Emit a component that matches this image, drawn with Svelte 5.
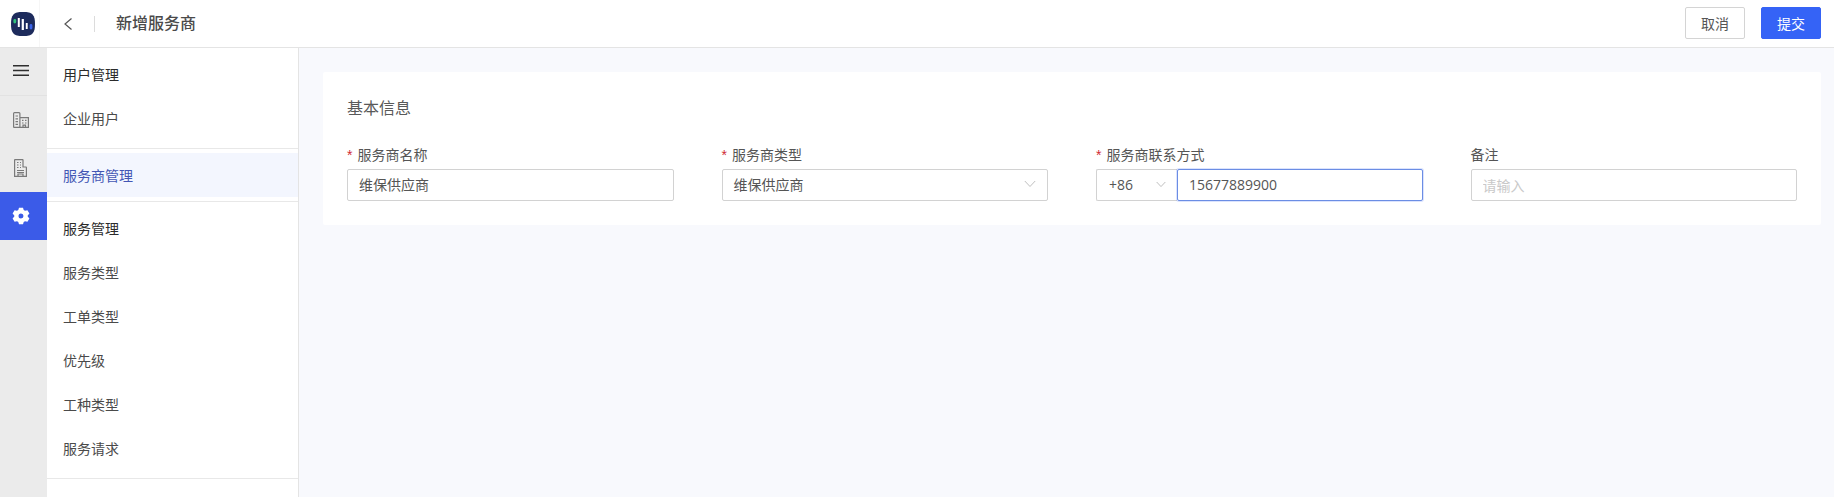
<script>
  const groups = [
    { items: [{ t: '用户管理', h: true }, { t: '企业用户' }] },
    { items: [{ t: '服务商管理', active: true }], single: true },
    { items: [{ t: '服务管理', h: true }, { t: '服务类型' }, { t: '工单类型' }, { t: '优先级' }, { t: '工种类型' }, { t: '服务请求' }] }
  ];
</script>

<div class="page">
  <header class="top">
    <div class="logo-cell">
      <svg width="24" height="24" viewBox="0 0 24 24" aria-hidden="true">
        <path d="M12 0c5 0 7.500.5 9.500 2.500S24 7.500 24 12s-.5 7.500-2.500 9.500S17 24 12 24s-7.500-.5-9.500-2.500S0 16.500 0 12s.5-7.500 2.500-9.500S7 0 12 0z" fill="#1d2b5c"/>
        <rect x="2.400" y="7" width="2.800" height="4.500" rx="1.400" fill="#2fc27a"/>
        <rect x="6.800" y="6" width="2" height="9" fill="#fff"/>
        <rect x="10.700" y="7" width="2.200" height="11" fill="#fff"/>
        <rect x="14.800" y="11" width="1.900" height="6" fill="#fff"/>
        <rect x="18.600" y="12" width="2.800" height="5.500" rx="1.400" fill="#3a62e8"/>
      </svg>
    </div>
    <button class="back" aria-label="返回">
      <svg width="10" height="14" viewBox="0 0 10 14"><path d="M8.500 1.500 2 7l6.500 5.500" fill="none" stroke="#555" stroke-width="1.200"/></svg>
    </button>
    <span class="vline"></span>
    <h1>新增服务商</h1>
    <div class="actions">
      <button class="btn">取消</button>
      <button class="btn primary">提交</button>
    </div>
  </header>

  <div class="body">
    <nav class="rail">
      <div class="rail-item menu">
        <svg width="16" height="11" viewBox="0 0 16 11"><path d="M0 .75h16M0 5.500h16M0 10.250h16" stroke="#2e2e2e" stroke-width="1.300"/></svg>
      </div>
      <div class="rail-item">
        <svg width="16" height="16" viewBox="0 0 16 16" fill="none" stroke="#7a7a7a" stroke-width="1.200">
          <path d="M.6 15.400V1.500q0-.9.9-.9h4.500q.9 0 .9.9v13.900M6.900 5.600h8.500v9.800H.6"/>
          <path d="M2.500 4h2.500M2.500 6.800h2.500M2.500 9.600h2.500M2.500 12.400h2.500M9 8.400h1.500M12 8.400h1.500M9 11h1.500M12 11h1.500M10 15.400v-2.200h2.500v2.200"/>
        </svg>
      </div>
      <div class="rail-item">
        <svg width="13" height="18" viewBox="0 0 13 18" fill="none" stroke="#7a7a7a" stroke-width="1.200">
          <path d="M.6 17.400V1q0-.4.4-.4h7.600q.4 0 .4.4v7H12q.4 0 .4.4v9z"/>
          <path d="M3 3.500h1.500M6 3.500h1M3 6h1.500M6 6h1M3 8.500h1.500M6 8.500h1M3 11.500h7M3 13.500h7M4 17.400v-2.400h5v2.400"/>
        </svg>
      </div>
      <div class="rail-item on">
        <svg width="18" height="18" viewBox="0 0 18 18"><path fill-rule="evenodd" d="M7 .8h4l.7 2.300 1.300.7 2.400-.6 2 3.400-1.700 1.800v1.200l1.700 1.800-2 3.400-2.400-.6-1.300.7-.7 2.300H7l-.7-2.300-1.300-.7-2.400.6-2-3.400 1.700-1.800V8.400L.6 6.600l2-3.400 2.400.6 1.300-.7zM9 6.500a2.500 2.500 0 1 0 0 5 2.500 2.500 0 0 0 0-5z" fill="#fff"/></svg>
      </div>
    </nav>

    <aside class="side">
      {#each groups as g}
        <div class="group" class:single={g.single}>
          {#each g.items as it}
            <div class="item" class:head={it.h} class:active={it.active}>{it.t}</div>
          {/each}
        </div>
      {/each}
    </aside>

    <main class="main">
      <section class="card">
        <h2>基本信息</h2>
        <div class="form">
          <div class="field">
            <span class="label"><i>*</i>服务商名称</span>
            <input class="input raised" value="维保供应商" readonly />
          </div>
          <div class="field">
            <span class="label"><i>*</i>服务商类型</span>
            <div class="input select raised">
              <span>维保供应商</span>
              <svg width="12" height="8" viewBox="0 0 12 8"><path d="M.8 1 6 6.500 11.200 1" fill="none" stroke="#bfbfbf" stroke-width="1"/></svg>
            </div>
          </div>
          <div class="field">
            <span class="label"><i>*</i>服务商联系方式</span>
            <div class="phone">
              <div class="input code raised">
                <span>+86</span>
                <svg width="10" height="7" viewBox="0 0 12 8"><path d="M.8 1 6 6.500 11.200 1" fill="none" stroke="#bfbfbf" stroke-width="1.200"/></svg>
              </div>
              <input class="input num raised" value="15677889900" readonly />
            </div>
          </div>
          <div class="field">
            <span class="label">备注</span>
            <input class="input" placeholder="请输入" readonly />
          </div>
        </div>
      </section>
    </main>
  </div>
</div>

<style>
  :global(body) { margin: 0; }
  .page {
    width: 1834px; height: 497px; overflow: hidden;
    display: flex; flex-direction: column;
    font-family: "Open Sans", "Noto Sans CJK SC", sans-serif;
    font-size: 14px; color: #4a4a4a; background: #f8f9fd;
  }
  .top {
    height: 47px; flex: none; box-sizing: content-box; background: #fff; border-bottom: 1px solid #e4e4e4;
    display: flex; align-items: center; padding-right: 13px;
  }
  .logo-cell {
    width: 40px; height: 47px; flex: none; margin-right: 23px;
    display: flex; align-items: center; justify-content: center;
    padding-left: 6px; box-sizing: border-box;
    border-right: 1px solid #f6f6f6;
  }
  .back { border: 0; background: none; padding: 0; width: 10px; height: 14px; display: block; line-height: 0; }
  .vline { width: 1px; height: 16px; background: #dcdcdc; margin: 0 20px 0 21px; }
  h1 { margin: 0 0 1px 1px; font-size: 16px; font-weight: 500; color: #4a4a4a; line-height: 24px; }
  .actions { margin-left: auto; margin-bottom: 1px; display: flex; gap: 16px; }
  .btn {
    width: 60px; height: 32px; border: 1px solid #d4d4d4; border-radius: 2px;
    background: #fff; color: #555; font: inherit; font-size: 14px; padding: 0;
  }
  .btn.primary { background: #3563f6; border-color: #3563f6; color: #fff; }

  .body { flex: 1; display: flex; min-height: 0; }
  .rail { width: 47px; flex: none; background: #ebebeb; }
  .rail-item { height: 48px; display: flex; align-items: center; justify-content: center; padding-right: 6px; box-sizing: border-box; }
  .rail-item.menu { border-bottom: 1px solid #e2e2e2; padding-bottom: 3px; }
  .rail-item.on { background: #3b5be8; }
  .side {
    width: 252px; flex: none; box-sizing: border-box; background: #fff;
    border-right: 1px solid #e4e4e4;
  }
  .group { padding: 5px 0 7px; border-bottom: 1px solid #e8e8e8; }
  .group.single { padding: 4px 0; }
  .item { height: 44px; line-height: 44px; padding-left: 16px; color: #4a4a4a; }
  .item.head { color: #2b2b2b; }
  .item.active { background: #f3f6fe; color: #4356b4; line-height: 46px; }

  .main { flex: 1; padding: 24px 13px 0 24px; min-width: 0; }
  .card { background: #fff; height: 153px; border-radius: 2px; padding: 24px 24px 0; box-sizing: border-box; }
  h2 { margin: 0 0 25px; font-size: 16px; font-weight: 400; line-height: 24px; color: #595959; }
  .form { display: grid; grid-template-columns: repeat(4, 1fr); column-gap: 48px; }
  .field { min-width: 0; display: flex; flex-direction: column; }
  .label { line-height: 20px; height: 20px; margin-bottom: 4px; color: #555; }
  .label i { font-style: normal; color: #cf2a34; margin-right: 5px; font-family: "Liberation Sans", sans-serif; }
  .input {
    height: 32px; width: 100%; box-sizing: border-box; border: 1px solid #d2d2d2; border-radius: 2px;
    padding: 0 11px; font: inherit; font-size: 14px; color: #555; background: #fff; outline: none;
  }
  .input.raised { padding-bottom: 2px; }
  .input::placeholder { color: #c9c9c9; }
  .select, .code { display: flex; align-items: center; justify-content: space-between; }
  .phone { display: flex; }
  .code { width: 81px; flex: none; border-right: 0; border-radius: 2px 0 0 2px; padding-right: 11px; padding-left: 12px; }
  .num {
    flex: 1; width: auto; min-width: 0; border-color: #6b8de4; border-radius: 2px;
    box-shadow: 0 0 0 1px rgba(53, 99, 246, .18);
  }
</style>
